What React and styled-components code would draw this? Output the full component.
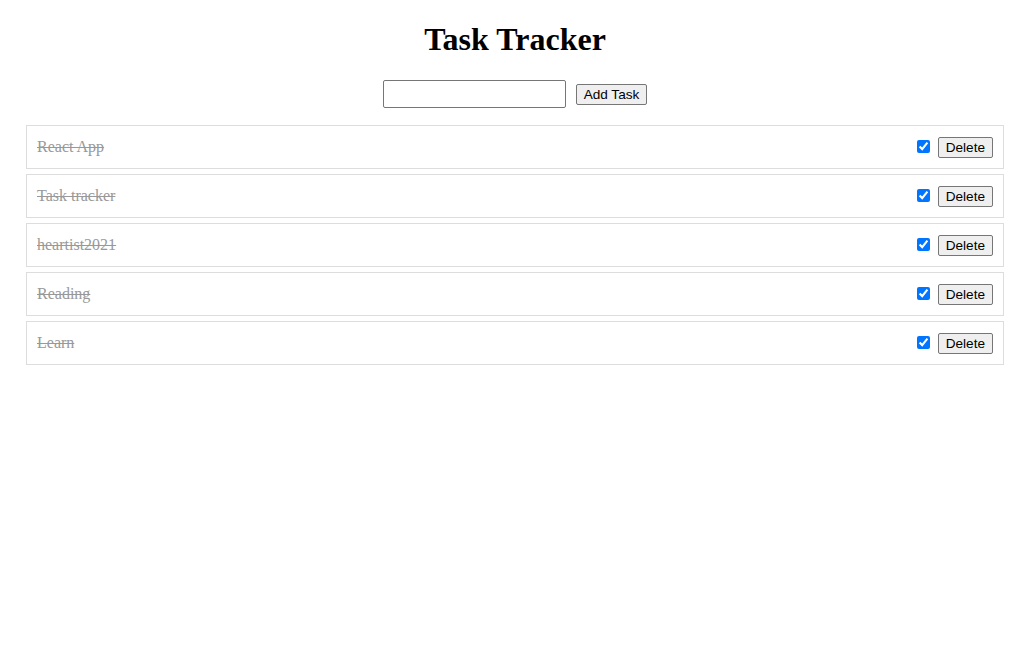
import React, { useState } from 'react';
import styled, { createGlobalStyle } from 'styled-components';

const GlobalStyle = createGlobalStyle`
  body {
    margin: 0;
    background: #fff;
    font-family: 'Liberation Serif', 'Times New Roman', serif;
  }
`;

const Wrapper = styled.div`
  margin: 0 25px 0 26px;
`;

const Title = styled.h1`
  font-size: 32px;
  font-weight: 700;
  text-align: center;
  margin: 21.44px 0;
  line-height: 37px;
  color: #000;
`;

const Form = styled.form`
  display: flex;
  justify-content: center;
  align-items: center;
  gap: 10px;
  margin-bottom: 17px;
`;

const TextInput = styled.input`
  width: 183px;
  height: 28px;
  box-sizing: border-box;
  border: 1px solid #767676;
  border-radius: 2px;
  padding: 4px 6px;
  font-family: 'Liberation Sans', Arial, sans-serif;
  font-size: 13.33px;
`;

const Button = styled.button`
  height: 21px;
  box-sizing: border-box;
  padding: 1px 7px;
  margin-top: ${props => props.$offset || 0}px;
  border: 1px solid #767676;
  border-radius: 2px;
  background: #efefef;
  color: #000;
  font-family: 'Liberation Sans', Arial, sans-serif;
  font-size: 13.6px;
  line-height: 17px;
  cursor: pointer;
`;

const List = styled.ul`
  list-style: none;
  margin: 0;
  padding: 0;
`;

const Row = styled.li`
  display: flex;
  align-items: center;
  height: 44px;
  box-sizing: border-box;
  padding: 1px 10px 0;
  margin-bottom: 5px;
  border: 1px solid #ddd;
`;

const TaskText = styled.span`
  flex: 1;
  font-size: 16px;
  color: ${props => props.done ? '#999' : '#000'};
  text-decoration: ${props => props.done ? 'line-through' : 'none'};
`;

const Check = styled.input`
  width: 13px;
  height: 13px;
  margin: 0 8px 2px 0;
  accent-color: #0075ff;
`;

const initial = [
  { id: 1, text: 'React App', done: true },
  { id: 2, text: 'Task tracker', done: true },
  { id: 3, text: 'heartist2021', done: true },
  { id: 4, text: 'Reading', done: true },
  { id: 5, text: 'Learn', done: true },
];

const App = () => {
  const [tasks, setTasks] = useState(initial);
  const [value, setValue] = useState('');

  const addTask = (e) => {
    e.preventDefault();
    if (!value.trim()) return;
    setTasks([...tasks, { id: Date.now(), text: value, done: false }]);
    setValue('');
  };

  const toggle = (id) => setTasks(tasks.map(t => t.id === id ? { ...t, done: !t.done } : t));
  const remove = (id) => setTasks(tasks.filter(t => t.id !== id));

  return (
    <Wrapper>
      <GlobalStyle />
      <Title>Task Tracker</Title>
      <Form onSubmit={addTask}>
        <TextInput value={value} onChange={e => setValue(e.target.value)} />
        <Button type="submit" $offset={1}>Add Task</Button>
      </Form>
      <List>
        {tasks.map(t => (
          <Row key={t.id}>
            <TaskText done={t.done}>{t.text}</TaskText>
            <Check type="checkbox" checked={t.done} onChange={() => toggle(t.id)} />
            <Button onClick={() => remove(t.id)}>Delete</Button>
          </Row>
        ))}
      </List>
    </Wrapper>
  );
};

export default App;
